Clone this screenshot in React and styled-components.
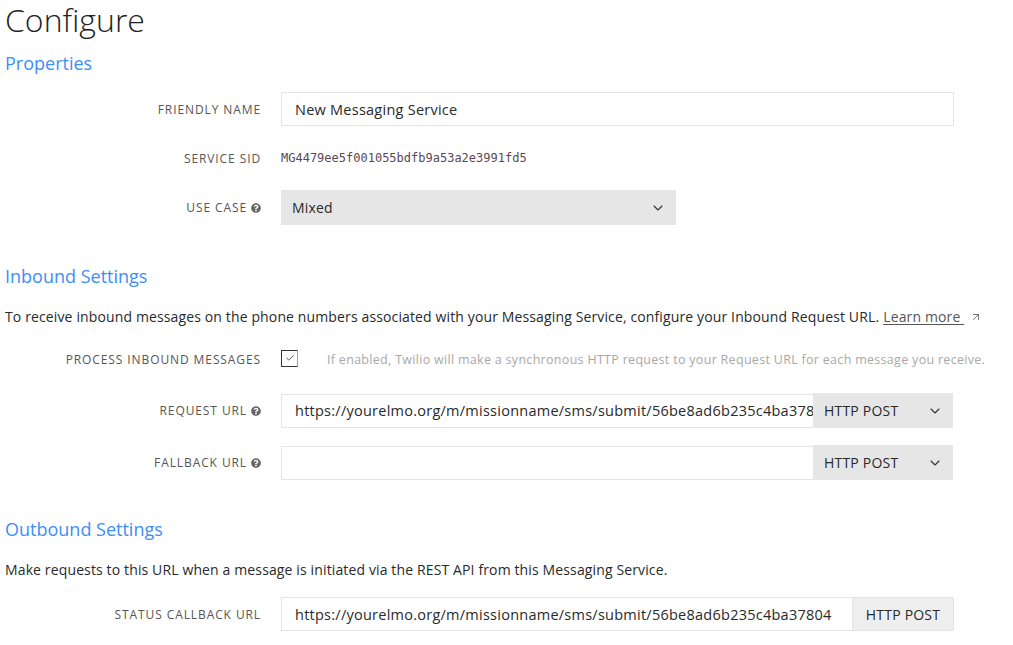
import React from "react";
import styled, { createGlobalStyle } from "styled-components";
import { FaQuestionCircle } from "react-icons/fa";
import { ChevronDown, ArrowUpRight, Check } from "lucide-react";

const GlobalStyle = createGlobalStyle`
    body {
        margin: 0;
        background: #fff;
        font-family: "Open Sans", "Liberation Sans", sans-serif;
        color: #282a2b;
    }
`

const Page = styled.div`
    padding: 0 5px;
    width: 1003px;
`

const Title = styled.h1`
    margin: 0;
    padding-top: 1px;
    font-size: 32px;
    line-height: 37px;
    font-weight: 300;
    color: #222;
`

const SectionTitle = styled.h2`
    margin: ${props => props.first ? "12px" : "38px"} 0 0;
    font-size: 18px;
    line-height: 26px;
    font-weight: 400;
    color: #3d8ef7;
`

const Intro = styled.p`
    margin: 18px 0 0;
    font-size: 14px;
    line-height: 20px;
    letter-spacing: 0.13px;
    color: #282a2b;
`

const LearnMore = styled.a`
    color: #565656;
    text-decoration: underline;
    text-underline-offset: 2px;
    margin-left: 4px;
`

const Form = styled.div`
    display: grid;
    grid-template-columns: 256px 1fr;
    column-gap: 20px;
    row-gap: ${props => props.gap || 15}px;
    margin-top: ${props => props.top || 16}px;
    align-items: center;
`

const Label = styled.div`
    text-align: right;
    font-size: 12px;
    letter-spacing: 0.9px;
    text-transform: uppercase;
    color: #565656;
    display: flex;
    justify-content: flex-end;
    align-items: center;
    gap: 4px;
    height: 34px;

    svg {
        color: #666;
        width: 10px;
        height: 10px;
    }
`

const Field = styled.div`
    display: flex;
    align-items: center;
    min-height: 34px;
`

const TextInput = styled.input`
    box-sizing: border-box;
    width: ${props => props.width}px;
    height: 34px;
    border: 1px solid #e4e4e4;
    border-right: ${props => props.joined ? "none" : "1px solid #e4e4e4"};
    padding: 0 ${props => props.joined ? 0 : 13}px 0 13px;
    font-family: "Open Sans", "Liberation Sans", sans-serif;
    font-size: 14.5px;
    letter-spacing: 0.25px;
    color: #282a2b;
    background: #fff;
    outline: none;
`

const Sid = styled.span`
    font-family: "DejaVu Sans Mono", "Liberation Mono", monospace;
    font-size: 12px;
    color: #5b4857;
`

const Select = styled.div`
    box-sizing: border-box;
    width: ${props => props.width}px;
    height: ${props => props.height || 35}px;
    background: #e6e6e6;
    display: flex;
    align-items: center;
    justify-content: space-between;
    padding: 0 10px 0 11px;
    font-size: 14px;
    letter-spacing: 0.2px;
    color: #282a2b;

    svg {
        color: #333;
    }
`

const Checkbox = styled.span`
    box-sizing: border-box;
    width: 17px;
    height: 17px;
    border: 1px solid #333;
    border-right-color: #6aaee8;
    display: inline-flex;
    align-items: center;
    justify-content: center;
    margin-top: -2px;

    svg {
        color: #444;
    }
`

const Hint = styled.span`
    margin-left: 29px;
    font-size: 12.5px;
    letter-spacing: 0.3px;
    color: #a8a8a8;
`

const AddonButton = styled.div`
    box-sizing: border-box;
    width: 101px;
    height: 34px;
    background: #eeeeee;
    border: 1px solid #e4e4e4;
    border-left: none;
    display: flex;
    align-items: center;
    justify-content: center;
    font-size: 14px;
    letter-spacing: 0.2px;
    color: #282a2b;
`

const Help = () => <FaQuestionCircle />

export default function App() {
    return (
        <Page>
            <GlobalStyle />
            <Title>Configure</Title>

            <SectionTitle first>Properties</SectionTitle>
            <Form top={16}>
                <Label>Friendly Name</Label>
                <Field>
                    <TextInput width={673} defaultValue="New Messaging Service" />
                </Field>
                <Label>Service SID</Label>
                <Field>
                    <Sid>MG4479ee5f001055bdfb9a53a2e3991fd5</Sid>
                </Field>
                <Label>Use Case <Help /></Label>
                <Field>
                    <Select width={395}>
                        Mixed
                        <ChevronDown size={16} strokeWidth={1.6} />
                    </Select>
                </Field>
            </Form>

            <SectionTitle>Inbound Settings</SectionTitle>
            <Intro>
                To receive inbound messages on the phone numbers associated with your Messaging Service, configure your Inbound Request URL.
                <LearnMore href="#">Learn more </LearnMore>
                <ArrowUpRight size={12} strokeWidth={1.6} style={{ marginLeft: 6, verticalAlign: -1, color: "#555" }} />
            </Intro>
            <Form top={15} gap={17}>
                <Label>Process Inbound Messages</Label>
                <Field>
                    <Checkbox><Check size={10} strokeWidth={2.2} /></Checkbox>
                    <Hint>If enabled, Twilio will make a synchronous HTTP request to your Request URL for each message you receive.</Hint>
                </Field>
                <Label>Request URL <Help /></Label>
                <Field>
                    <TextInput
                        width={532}
                        joined
                        defaultValue="https://yourelmo.org/m/missionname/sms/submit/56be8ad6b235c4ba37804"
                    />
                    <Select width={140} height={35}>
                        HTTP POST
                        <ChevronDown size={16} strokeWidth={1.6} />
                    </Select>
                </Field>
                <Label>Fallback URL <Help /></Label>
                <Field>
                    <TextInput width={532} joined defaultValue="" />
                    <Select width={140} height={35}>
                        HTTP POST
                        <ChevronDown size={16} strokeWidth={1.6} />
                    </Select>
                </Field>
            </Form>

            <SectionTitle style={{ marginTop: 36 }}>Outbound Settings</SectionTitle>
            <Intro>Make requests to this URL when a message is initiated via the REST API from this Messaging Service.</Intro>
            <Form top={17}>
                <Label>Status Callback URL</Label>
                <Field>
                    <TextInput
                        width={572}
                        defaultValue="https://yourelmo.org/m/missionname/sms/submit/56be8ad6b235c4ba37804"
                    />
                    <AddonButton>HTTP POST</AddonButton>
                </Field>
            </Form>
        </Page>
    );
}
